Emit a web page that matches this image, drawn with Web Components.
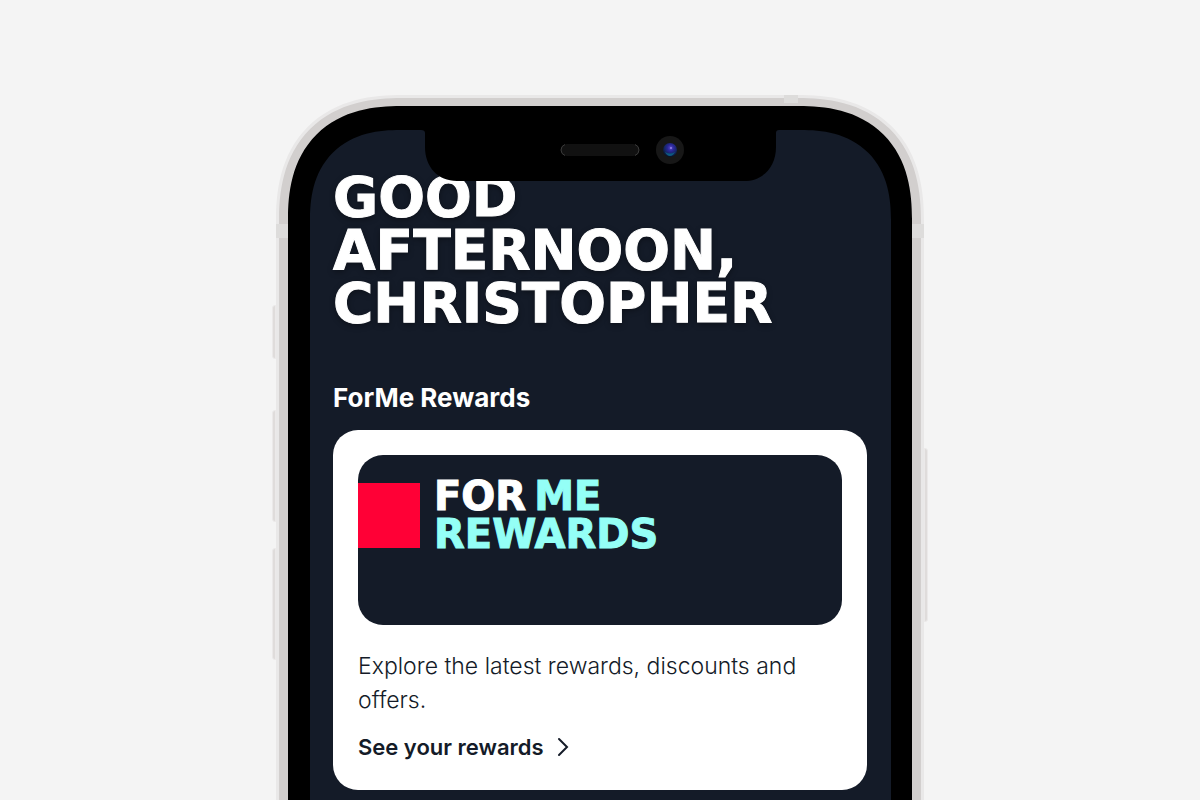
<!DOCTYPE html>
<html lang="en">
<head>
    <meta charset="UTF-8">
    <meta name="viewport" content="width=device-width, initial-scale=1.0">
    <title>ForMe Rewards</title>
    <style>
        body {
            margin: 0;
            background-color: #f4f4f4;
            font-family: Inter, "Liberation Sans", sans-serif;
            --navy: #141b28;
            --mint: #94fff6;
            --red: #ff0036;
            --display: "DejaVu Sans", Inter, sans-serif;
        }
    </style>
</head>
<body>
    <phone-frame>
        <greeting-title>Good afternoon, Christopher</greeting-title>
        <rewards-section heading="ForMe Rewards">
            <reward-card link="See your rewards">
                <reward-banner slot="banner">For<span slot="accent">me</span><span slot="second">rewards</span></reward-banner>
                Explore the latest rewards, discounts and offers.
            </reward-card>
        </rewards-section>
    </phone-frame>

    <script>
        // phone shell: metal rim, black bezel, screen
        class PhoneFrame extends HTMLElement {
            constructor() {
                super();
                this.shadowDOM = this.attachShadow({mode: 'open'});
            }

            connectedCallback() {
                this.render();
            }

            render() {
                this.shadowDOM.innerHTML = `
                    <style>
                        * {
                            box-sizing: border-box;
                        }

                        :host {
                            display: flex;
                            justify-content: center;
                            box-sizing: border-box;
                            height: 100vh;
                            padding: 95px 16px 0;
                            overflow: hidden;
                        }

                        .rim {
                            position: relative;
                            display: flex;
                            width: 100%;
                            max-width: 648px;
                            padding: 3px 3px 0;
                            background-color: #e9e8e8;
                            border-radius: 108px 108px 0 0;
                        }

                        .metal {
                            display: flex;
                            flex: 1;
                            padding: 8px 9px 0;
                            background-color: #d2cfce;
                            border-radius: 105px 105px 0 0;
                        }

                        .bezel {
                            flex: 1;
                            display: flex;
                            padding: 24px 21px 0 22px;
                            background-color: #000;
                            border-radius: 97px 97px 0 0;
                        }

                        .screen {
                            position: relative;
                            flex: 1;
                            padding: 41px 24px 0 23px;
                            background-color: var(--navy);
                            border-radius: 76px 76px 0 0;
                        }

                        /* smoother corners where the browser has them */
                        @supports (corner-shape: superellipse(1.25)) {
                            .rim, .metal, .bezel, .screen {
                                corner-shape: superellipse(1.25);
                            }

                            .rim { border-radius: 126px 126px 0 0; }
                            .metal { border-radius: 123px 123px 0 0; }
                            .bezel { border-radius: 113px 113px 0 0; }
                            .screen { border-radius: 90px 90px 0 0; }
                        }

                        phone-notch {
                            position: absolute;
                            top: 0;
                            left: 0;
                            right: 1px;
                        }

                        .key, .band {
                            position: absolute;
                        }

                        .key {
                            width: 4px;
                            background-color: #dfdcdb;
                            border: 1px solid #ebe9e9;
                        }

                        .left {
                            right: 100%;
                            border-radius: 3px 0 0 3px;
                        }

                        .right {
                            left: 100%;
                            border-radius: 0 3px 3px 0;
                        }

                        .mute { top: 210px; height: 54px; }
                        .up { top: 315px; height: 112px; }
                        .down { top: 453px; height: 112px; }
                        .power { top: 353px; height: 174px; }

                        .band {
                            background-color: #dddcdb;
                        }

                        .side {
                            top: 129px;
                            width: 12px;
                            height: 14px;
                        }

                        .side.l { left: 0; }
                        .side.r { right: 0; }

                        .top {
                            top: 0;
                            right: 126px;
                            width: 14px;
                            height: 8px;
                        }
                    </style>

                    <div class="rim">
                        <i class="key left mute"></i>
                        <i class="key left up"></i>
                        <i class="key left down"></i>
                        <i class="key right power"></i>
                        <i class="band side l"></i>
                        <i class="band side r"></i>
                        <i class="band top"></i>
                        <div class="metal">
                            <div class="bezel">
                                <main class="screen">
                                    <slot></slot>
                                    <phone-notch></phone-notch>
                                </main>
                            </div>
                        </div>
                    </div>`;
            }
        }

        customElements.define('phone-frame', PhoneFrame);


        // notch with speaker and camera
        class PhoneNotch extends HTMLElement {
            constructor() {
                super();
                this.shadowDOM = this.attachShadow({mode: 'open'});
            }

            connectedCallback() {
                this.render();
            }

            render() {
                this.shadowDOM.innerHTML = `
                    <style>
                        :host {
                            display: flex;
                            justify-content: center;
                        }

                        svg {
                            display: block;
                        }
                    </style>

                    <svg width="358" height="52" viewBox="0 0 358 52" aria-hidden="true">
                        <defs>
                            <radialGradient id="lens" cx="55%" cy="35%" r="65%">
                                <stop offset="0" stop-color="#5a49c8"/>
                                <stop offset=".35" stop-color="#2a2798"/>
                                <stop offset=".7" stop-color="#13265f"/>
                                <stop offset="1" stop-color="#071326"/>
                            </radialGradient>
                        </defs>
                        <path d="M0 -1H358V0Q355 0 355 3V17C355 37 342 51 323 51H36C17 51 4 37 4 17V3Q4 0 0 0Z"/>
                        <rect x="140" y="14" width="78" height="12" rx="6" fill="#111"/>
                        <path d="M144 14.500Q140 16 140 20T144 25.500M214 14.500Q218 16 218 20T214 25.500" fill="none" stroke="#3c3c3c"/>
                        <circle cx="249" cy="20" r="14" fill="#171717"/>
                        <circle cx="249" cy="20" r="7" fill="url(#lens)"/>
                        <path d="M244 22Q249 25 254 22Q252 26 249 26T244 22Z" fill="#0d5a80"/>
                        <circle cx="250" cy="18" r="1" fill="#9180e8"/>
                    </svg>`;
            }
        }

        customElements.define('phone-notch', PhoneNotch);


        class GreetingTitle extends HTMLElement {
            constructor() {
                super();
                this.shadowDOM = this.attachShadow({mode: 'open'});
            }

            connectedCallback() {
                this.render();
            }

            render() {
                this.shadowDOM.innerHTML = `
                    <style>
                        :host {
                            display: block;
                        }

                        h1 {
                            margin: 0;
                            font: bold 55px/53px var(--display);
                            text-transform: uppercase;
                            color: white;
                            text-shadow: 0 2px 6px rgba(0, 0, 0, 0.4);
                            -webkit-text-stroke: 1px white;
                        }
                    </style>

                    <h1><slot></slot></h1>`;
            }
        }

        customElements.define('greeting-title', GreetingTitle);


        class RewardsSection extends HTMLElement {
            constructor() {
                super();
                this.shadowDOM = this.attachShadow({mode: 'open'});
            }

            connectedCallback() {
                this.render();
            }

            render() {
                this.shadowDOM.innerHTML = `
                    <style>
                        :host {
                            display: block;
                            margin-top: 52px;
                        }

                        h2 {
                            margin: 0 0 16px;
                            font-size: 26px;
                            font-weight: 700;
                            line-height: 32px;
                            color: white;
                        }
                    </style>

                    <section aria-labelledby="title">
                        <h2 id="title">${this.getAttribute('heading')}</h2>
                        <slot></slot>
                    </section>`;
            }
        }

        customElements.define('rewards-section', RewardsSection);


        class RewardCard extends HTMLElement {
            constructor() {
                super();
                this.shadowDOM = this.attachShadow({mode: 'open'});
            }

            connectedCallback() {
                this.render();
            }

            render() {
                this.shadowDOM.innerHTML = `
                    <style>
                        :host {
                            display: block;
                            padding: 25px 25px 29px;
                            background-color: white;
                            border-radius: 25px;
                            color: var(--navy);
                        }

                        p {
                            margin: 24px 0 16px;
                            font-size: 23px;
                            font-weight: 300;
                            line-height: 34px;
                        }

                        a {
                            display: inline-flex;
                            align-items: center;
                            gap: 12px;
                            font-size: 22px;
                            font-weight: 600;
                            line-height: 28px;
                            color: inherit;
                            text-decoration: none;
                        }
                    </style>

                    <slot name="banner"></slot>
                    <p><slot></slot></p>
                    <a href="#rewards">${this.getAttribute('link')}
                        <svg width="14" height="20" viewBox="0 0 14 20" fill="none" stroke="currentColor" stroke-width="2" stroke-linecap="round" aria-hidden="true">
                            <path d="M3 2L11 10L3 18"/>
                        </svg>
                    </a>`;
            }
        }

        customElements.define('reward-card', RewardCard);


        class RewardBanner extends HTMLElement {
            constructor() {
                super();
                this.shadowDOM = this.attachShadow({mode: 'open'});
            }

            connectedCallback() {
                this.render();
            }

            render() {
                this.shadowDOM.innerHTML = `
                    <style>
                        :host {
                            display: flex;
                            align-items: flex-start;
                            gap: 14px;
                            box-sizing: border-box;
                            min-height: 170px;
                            padding: 28px 0;
                            background-color: var(--navy);
                            border-radius: 25px;
                            overflow: hidden;
                        }

                        .block {
                            width: 62px;
                            height: 65px;
                            background-color: var(--red);
                        }

                        .name {
                            margin-top: -6px;
                            font: bold 40px/38px var(--display);
                            text-transform: uppercase;
                            color: white;
                            -webkit-text-stroke: 1px currentColor;
                        }

                        .row {
                            display: flex;
                            gap: 8px;
                        }

                        .accent {
                            color: var(--mint);
                        }
                    </style>

                    <div class="block"></div>
                    <div class="name">
                        <div class="row">
                            <span><slot></slot></span>
                            <span class="accent"><slot name="accent"></slot></span>
                        </div>
                        <div class="accent"><slot name="second"></slot></div>
                    </div>`;
            }
        }

        customElements.define('reward-banner', RewardBanner);
    </script>
</body>
</html>
